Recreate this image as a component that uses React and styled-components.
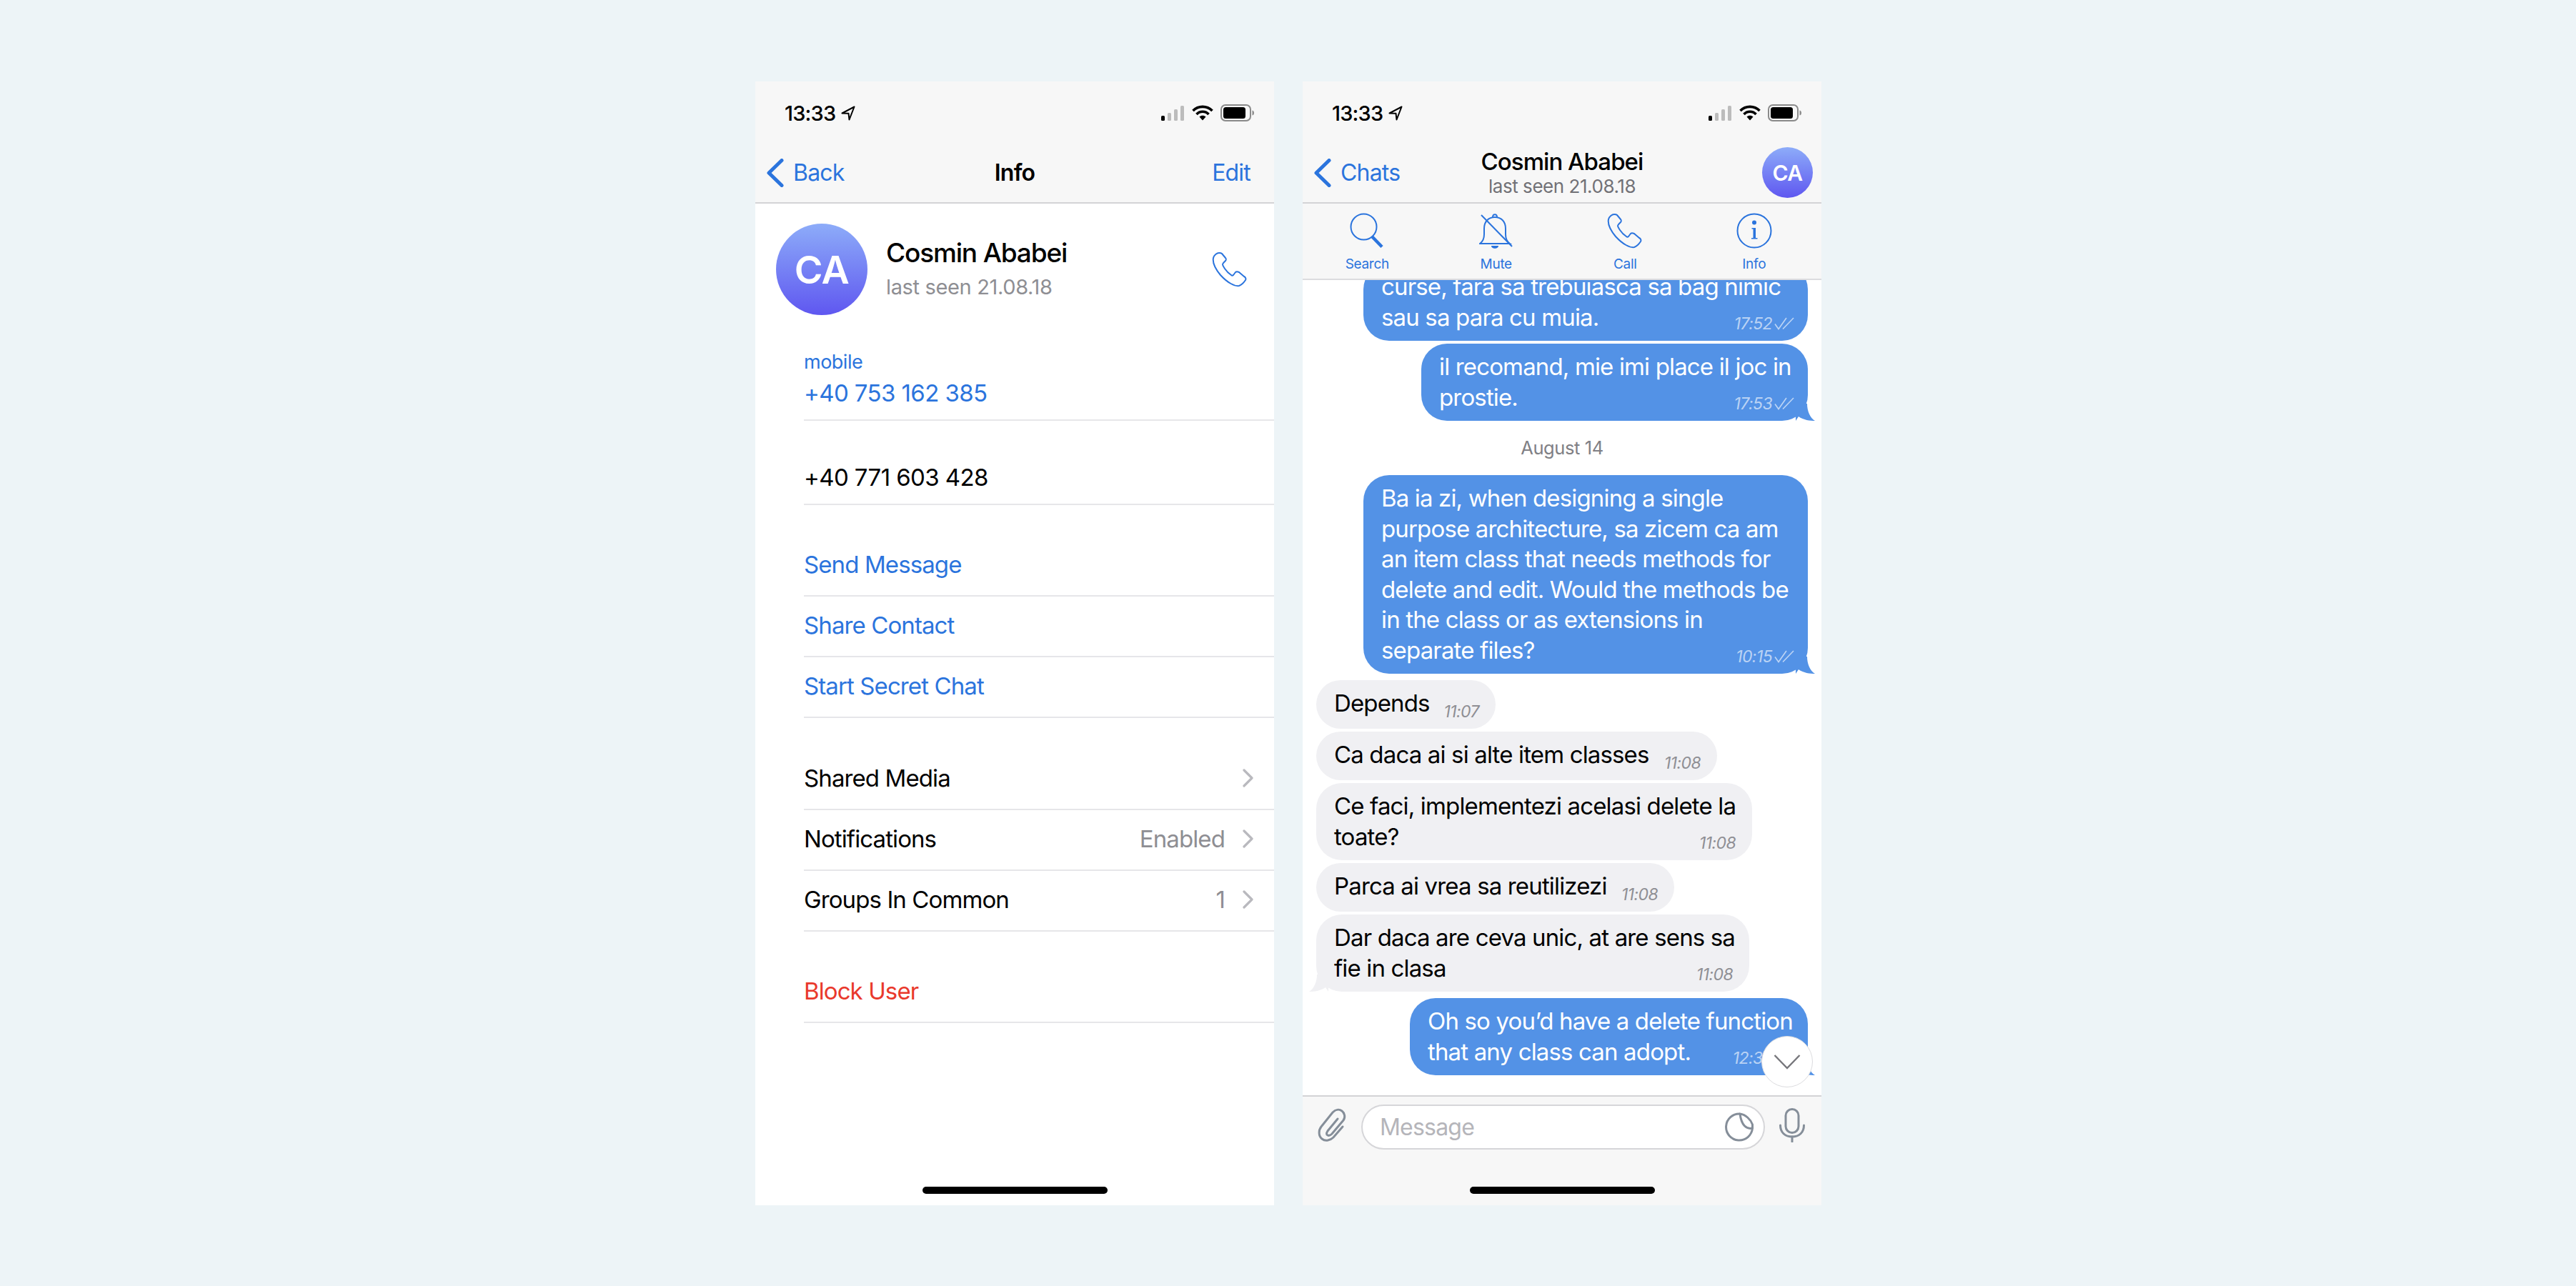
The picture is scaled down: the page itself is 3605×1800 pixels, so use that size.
import React from "react";
import styled, { createGlobalStyle } from "styled-components";

const BLUE = "#2b74dd";
const ICON_GREY = "#858e99";

const GlobalStyle = createGlobalStyle`
  html, body {
    margin: 0;
    background: #edf4f7;
    font-family: Inter, "Liberation Sans", sans-serif;
    color: #000;
  }
  * {
    box-sizing: border-box;
  }
`;

const Page = styled.div`
  display: flex;
  justify-content: center;
  gap: 40px;
  height: 1800px;
  padding-top: 114px;
  padding-left: 1px;
`;

const Phone = styled.div`
  display: flex;
  flex-direction: column;
  width: 726px;
  height: 1573px;
  background: ${(p) => (p.$chat ? "#f7f7f7" : "#fff")};
`;

// top bars
const StatusBarWrap = styled.div`
  display: flex;
  align-items: center;
  justify-content: space-between;
  height: 88px;
  padding: 0 28px 0 41px;
  background: #f7f7f7;
`;

const Clock = styled.div`
  display: flex;
  align-items: center;
  gap: 8px;
  font-size: 29px;
  font-weight: 500;
  letter-spacing: -0.8px;
`;

const StatusIcons = styled.div`
  display: flex;
  align-items: center;
  gap: 10px;
`;

const NavBar = styled.div`
  display: grid;
  grid-template-columns: 1fr auto 1fr;
  align-items: center;
  height: 83px;
  padding: 0 12px 2px;
  background: #f7f7f7;
  border-bottom: 2px solid #d3d3d6;
`;

const NavBack = styled.div`
  display: flex;
  align-items: center;
  gap: 13px;
  margin-left: 4px;
  color: ${BLUE};
  font-size: 32px;
  letter-spacing: -0.8px;
`;

const NavTitle = styled.div`
  font-size: 32px;
  font-weight: 600;
  letter-spacing: -0.8px;
`;

const NavAction = styled.div`
  justify-self: end;
  margin-right: 21px;
  color: ${BLUE};
  font-size: 32px;
  letter-spacing: -0.8px;
`;

const NavCenter = styled.div`
  display: flex;
  flex-direction: column;
  align-items: center;
`;

const NavName = styled.div`
  font-size: 33px;
  line-height: 38px;
  font-weight: 500;
  letter-spacing: -0.95px;
`;

const NavSub = styled.div`
  font-size: 26px;
  line-height: 32px;
  color: #717176;
  letter-spacing: -0.45px;
`;

const Avatar = styled.div`
  display: flex;
  align-items: center;
  justify-content: center;
  flex-shrink: 0;
  justify-self: end;
  width: ${(p) => p.$size}px;
  height: ${(p) => p.$size}px;
  border-radius: 50%;
  background: linear-gradient(180deg, #8dacf9 0%, #5f57f0 100%);
  color: #fff;
  font-size: ${(p) => p.$font}px;
  font-weight: 600;
  letter-spacing: -0.5px;
`;

// info screen
const InfoBody = styled.div`
  display: flex;
  flex-direction: column;
  flex: 1;
`;

const Profile = styled.div`
  display: flex;
  align-items: center;
  gap: 26px;
  padding: 28px 37px 0 29px;
`;

const ProfileText = styled.div`
  flex: 1;
`;

const ProfileName = styled.div`
  margin-bottom: 8px;
  font-size: 37px;
  line-height: 42px;
  font-weight: 500;
  letter-spacing: -1.15px;
`;

const ProfileSeen = styled.div`
  font-size: 29px;
  line-height: 38px;
  color: #8e8e93;
  letter-spacing: -0.35px;
`;

const List = styled.div`
  margin-left: 68px;
`;

const PhoneRow = styled.div`
  margin-top: 46px;
  height: 102px;
  border-bottom: 2px solid #e6e6e9;
`;

const PhoneLabel = styled.div`
  height: 40px;
  line-height: 40px;
  font-size: 27px;
  color: ${BLUE};
  letter-spacing: -0.5px;
`;

const PhoneNumber = styled.div`
  height: 46px;
  line-height: 46px;
  font-size: 33px;
  color: ${BLUE};
  letter-spacing: -0.6px;
`;

const Row = styled.div`
  display: flex;
  align-items: center;
  justify-content: space-between;
  height: ${(p) => p.$height || 85}px;
  margin-top: ${(p) => p.$top || 0}px;
  padding: 0 29px ${(p) => (p.$flat ? 0 : 3)}px 0;
  border-bottom: 2px solid #e6e6e9;
  font-size: 33px;
  letter-spacing: ${(p) => (p.$flat ? "-0.6px" : "-0.9px")};
  color: ${(p) => p.$color || "#000"};
`;

const RowValue = styled.div`
  display: flex;
  align-items: center;
  gap: 25px;
  color: #8e8e93;
`;

const HomeBar = styled.div`
  flex-shrink: 0;
  width: 259px;
  height: 10px;
  margin: auto auto 16px;
  border-radius: 5px;
  background: #000;
`;

// chat screen
const Toolbar = styled.div`
  display: grid;
  grid-template-columns: repeat(4, 180.5px);
  height: 107px;
  background: #f7f7f7;
  border-bottom: 2px solid #dcdcdf;
`;

const ToolItem = styled.div`
  display: flex;
  flex-direction: column;
  align-items: center;
  color: ${BLUE};
  font-size: 19px;
  letter-spacing: -0.3px;
`;

const ToolIcon = styled.div`
  display: flex;
  align-items: flex-end;
  justify-content: center;
  height: 63px;
`;

const ToolLabel = styled.div`
  margin-top: 10px;
  line-height: 24px;
`;

const Messages = styled.div`
  position: relative;
  display: flex;
  flex-direction: column;
  justify-content: flex-end;
  flex: 1;
  min-height: 0;
  overflow: hidden;
  padding: 0 19px 28px;
  background: #fff;
`;

const Bubble = styled.div`
  position: relative;
  flex-shrink: 0;
  align-self: ${(p) => (p.$out ? "flex-end" : "flex-start")};
  width: ${(p) => p.$w}px;
  min-height: 68px;
  margin-top: ${(p) => (p.$mt === undefined ? 4 : p.$mt)}px;
  padding: 11px 25px 12px;
  border-radius: 36px;
  background: ${(p) => (p.$out ? "#5392e6" : "#f0f0f3")};
  color: ${(p) => (p.$out ? "#fff" : "#000")};
  font-size: 33px;
  line-height: 42.5px;
  letter-spacing: -0.85px;
  white-space: nowrap;
`;

const Tail = styled.svg`
  position: absolute;
  bottom: 0;
  ${(p) => (p.$out ? "right: -11px;" : "left: -11px;")}
  transform: ${(p) => (p.$out ? "none" : "scaleX(-1)")};
`;

const TimeStamp = styled.div`
  position: absolute;
  right: ${(p) => (p.$out ? 19 : 23)}px;
  bottom: 10px;
  display: flex;
  align-items: center;
  gap: 3px;
  font-size: 23px;
  line-height: 28px;
  font-style: italic;
  letter-spacing: -0.6px;
  color: ${(p) => (p.$out ? "rgba(255, 255, 255, 0.62)" : "#8e8e93")};
`;

const DateLabel = styled.div`
  flex-shrink: 0;
  height: 76px;
  line-height: 76px;
  text-align: center;
  font-size: 25.5px;
  font-weight: 400;
  color: #808085;
  letter-spacing: -0.4px;
`;

const ScrollDown = styled.div`
  position: absolute;
  right: 12px;
  bottom: 11px;
  display: flex;
  align-items: center;
  justify-content: center;
  width: 72px;
  height: 72px;
  border-radius: 50%;
  background: #fff;
  border: 1px solid #dcdcdf;
`;

const InputBar = styled.div`
  display: flex;
  align-items: flex-start;
  flex-shrink: 0;
  gap: 20px;
  height: 121px;
  padding: 11px 23px 0 21px;
  border-top: 2px solid #d3d3d6;
`;

const AttachSlot = styled.div`
  flex-shrink: 0;
  margin-top: ${(p) => p.$top}px;
  line-height: 0;
`;

const MessageField = styled.div`
  display: flex;
  align-items: center;
  justify-content: space-between;
  flex: 1;
  height: 63px;
  padding: 0 14px 0 24px;
  border: 2px solid #d6d6d9;
  border-radius: 32px;
  background: #fff;
  color: #b5b5ba;
  font-size: 32px;
  letter-spacing: -0.8px;
`;

const ChatFoot = styled.div`
  display: flex;
  flex-direction: column;
  flex-shrink: 0;
  height: 154px;
`;

// icons
const Signal = () => (
  <svg width="33" height="21" viewBox="0 0 33 21">
    <rect x="0" y="14" width="5" height="7" rx="1.5" fill="#000" />
    <rect x="9" y="10" width="5" height="11" rx="1.5" fill="#bcbcbc" />
    <rect x="18" y="5" width="5" height="16" rx="1.5" fill="#bcbcbc" />
    <rect x="27" y="0" width="5" height="21" rx="1.5" fill="#bcbcbc" />
  </svg>
);

const Wifi = () => (
  <svg width="30" height="22" viewBox="0 0 30 22" fill="none" stroke="#000" strokeWidth="3.6">
    <path d="M1.5 8 C9 0.5 21 0.5 28.5 8" />
    <path d="M6.5 13 C11 8 19 8 23.5 13" />
    <path d="M10.5 16.5 L15 21.5 L19.5 16.5 C17 14.2 13 14.2 10.5 16.5Z" fill="#000" stroke="none" />
  </svg>
);

const Battery = () => (
  <svg width="47" height="24" viewBox="0 0 47 24">
    <rect x="1" y="1" width="41" height="22" rx="6" fill="none" stroke="#8a8a8a" strokeWidth="2" />
    <rect x="4" y="4" width="31" height="16" rx="3.5" fill="#000" />
    <path d="M44.5 8.5 C46.5 9 47 10.5 47 12 C47 13.5 46.5 15 44.5 15.5Z" fill="#8a8a8a" />
  </svg>
);

const LocationArrow = () => (
  <svg width="20" height="21" viewBox="0 0 20 21" fill="none" stroke="#000" strokeWidth="2" strokeLinejoin="round">
    <path d="M18.5 1.5 L1.5 10.5 L10.5 10.8 L11.5 19.5 Z" />
  </svg>
);

const BackChevron = () => (
  <svg width="24" height="40" viewBox="0 0 24 40" fill="none" stroke={BLUE} strokeWidth="5" strokeLinecap="round" strokeLinejoin="round">
    <path d="M21 2.5 L3 20 L21 37.5" />
  </svg>
);

const DisclosureChevron = () => (
  <svg width="15" height="26" viewBox="0 0 15 26" fill="none" stroke="#b9b9be" strokeWidth="3.2" strokeLinecap="round" strokeLinejoin="round">
    <path d="M2 2 L13 13 L2 24" />
  </svg>
);

const Handset = () => (
  <svg width="50" height="50" viewBox="0 0 50 50" fill="none" stroke={BLUE} strokeWidth="2" strokeLinejoin="round">
    <path d="M10 2 C7 2 3 5 2 9 C1 14 3 22 12 33 C22 44 32 49 38 48 C41 47 45 43 47 40 C48 38 47 36 45 35 L38 29 C36 28 34 28 33 29 L30 33 C29 34 28 34 27 33 C24 31 20 27 18 24 C16 21 15 19 15 18 C15 17 16 16 17 15 L19 13 C20 12 20 10 19 9 L14 3 C13 2 12 2 10 2 Z" />
  </svg>
);

const SearchIcon = () => (
  <svg width="50" height="50" viewBox="0 0 50 50" fill="none" stroke={BLUE}>
    <circle cx="20.5" cy="19.5" r="18" strokeWidth="2" />
    <path d="M32 33 L46 47.5" strokeWidth="4.5" />
  </svg>
);

const MuteIcon = () => (
  <svg width="47" height="52" viewBox="0 0 47 52" fill="none" stroke={BLUE} strokeWidth="2">
    <path d="M1 45 C4 43 7 40 7 32 L7 24 C7 14 13 8 22 8 C31 8 37 14 37 24 L37 32 C37 40 40 43 43 45 Z" />
    <path d="M19 8 C19 3 25 3 25 8" />
    <path d="M17 48 H27 C27 53 17 53 17 48 Z" fill={BLUE} stroke="none" />
    <path d="M3 5 L46 49" />
  </svg>
);

const InfoIcon = () => (
  <svg width="50" height="50" viewBox="0 0 50 50" fill="none" stroke={BLUE} strokeWidth="2">
    <circle cx="25" cy="25" r="23.5" />
    <circle cx="25" cy="13.5" r="3" fill={BLUE} stroke="none" />
    <path d="M21.5 21 H27 V35 H29.5 V36.5 H21 V35 H23.5 V22.5 H21.5 Z" fill={BLUE} stroke="none" />
  </svg>
);

const Ticks = () => (
  <svg width="28" height="18" viewBox="0 0 28 18" fill="none" stroke="rgba(255,255,255,0.62)" strokeWidth="1.6">
    <path d="M1 9.5 L6 16.5 L17 1" />
    <path d="M12 16.5 L27 1" />
  </svg>
);

const TailShape = ({ out, color }) => (
  <Tail $out={out} width="28" height="24" viewBox="0 0 28 24">
    <path d="M0 0 H16 C16 10 20 20 27 24 C20 24 11 23 4 18 L0 24 Z" fill={color} />
  </Tail>
);

const DownChevron = () => (
  <svg width="38" height="22" viewBox="0 0 38 22" fill="none" stroke="#77777c" strokeWidth="2.4">
    <path d="M1.5 2 L19 20 L36.5 2" />
  </svg>
);

const Paperclip = () => (
  <svg width="41" height="48" viewBox="0 0 41 48" fill="none" stroke={ICON_GREY} strokeWidth="3" strokeLinecap="round">
    <path d="M28 15 L14 32 C12 35 12 37 14 38 C16 39 18 38 20 36 L36 17 C39 13 38 7 34 4 C30 1 25 2 21 6 L5 26 C1 31 1 39 6 43 C11 47 18 45 22 41 L35 26" />
  </svg>
);

const StickerIcon = () => (
  <svg width="40" height="41" viewBox="0 0 40 41" fill="none" stroke={ICON_GREY} strokeWidth="3" strokeLinejoin="round">
    <path d="M21 2 A18.5 18.5 0 1 0 38.5 22" />
    <path d="M21 2 C29 3 36 10 38.5 17 V22 C30 24 23 18 21 2 Z" />
  </svg>
);

const MicIcon = () => (
  <svg width="36" height="48" viewBox="0 0 36 48" fill="none" stroke={ICON_GREY} strokeWidth="3" strokeLinecap="round">
    <rect x="9" y="1.5" width="18" height="33" rx="9" />
    <path d="M1.5 24 C1.5 34 8 40 18 40 C28 40 34.5 34 34.5 24" />
    <path d="M18 40 V47" />
  </svg>
);

const StatusBar = () => (
  <StatusBarWrap>
    <Clock>
      13:33
      <LocationArrow />
    </Clock>
    <StatusIcons>
      <Signal />
      <Wifi />
      <Battery />
    </StatusIcons>
  </StatusBarWrap>
);

const tools = [
  { label: "Search", icon: <SearchIcon /> },
  { label: "Mute", icon: <MuteIcon /> },
  { label: "Call", icon: <Handset /> },
  { label: "Info", icon: <InfoIcon /> },
];

const Message = ({ out, w, mt, time, tail, children }) => (
  <Bubble $out={out} $w={w} $mt={mt}>
    {children}
    {tail && <TailShape out={out} color={out ? "#5392e6" : "#f0f0f3"} />}
    <TimeStamp $out={out}>
      {time}
      {out && <Ticks />}
    </TimeStamp>
  </Bubble>
);

const InfoScreen = () => (
  <Phone>
    <StatusBar />
    <NavBar>
      <NavBack>
        <BackChevron />
        Back
      </NavBack>
      <NavTitle>Info</NavTitle>
      <NavAction>Edit</NavAction>
    </NavBar>
    <InfoBody>
      <Profile>
        <Avatar $size={128} $font={54}>CA</Avatar>
        <ProfileText>
          <ProfileName>Cosmin Ababei</ProfileName>
          <ProfileSeen>last seen 21.08.18</ProfileSeen>
        </ProfileText>
        <Handset />
      </Profile>
      <List>
        <PhoneRow>
          <PhoneLabel>mobile</PhoneLabel>
          <PhoneNumber>+40 753 162 385</PhoneNumber>
        </PhoneRow>
        <Row $flat $top={42} $height={76}>+40 771 603 428</Row>
        <Row $top={43} $color={BLUE}>Send Message</Row>
        <Row $color={BLUE}>Share Contact</Row>
        <Row $color={BLUE}>Start Secret Chat</Row>
        <Row $top={44}>
          Shared Media
          <DisclosureChevron />
        </Row>
        <Row>
          Notifications
          <RowValue>
            Enabled
            <DisclosureChevron />
          </RowValue>
        </Row>
        <Row>
          Groups In Common
          <RowValue>
            1
            <DisclosureChevron />
          </RowValue>
        </Row>
        <Row $top={43} $color="#e9392c">Block User</Row>
      </List>
      <HomeBar />
    </InfoBody>
  </Phone>
);

const ChatScreen = () => (
  <Phone $chat>
    <StatusBar />
    <NavBar>
      <NavBack>
        <BackChevron />
        Chats
      </NavBack>
      <NavCenter>
        <NavName>Cosmin Ababei</NavName>
        <NavSub>last seen 21.08.18</NavSub>
      </NavCenter>
      <Avatar $size={71} $font={30}>CA</Avatar>
    </NavBar>
    <Toolbar>
      {tools.map((tool) => (
        <ToolItem key={tool.label}>
          <ToolIcon>{tool.icon}</ToolIcon>
          <ToolLabel>{tool.label}</ToolLabel>
        </ToolItem>
      ))}
    </Toolbar>
    <Messages>
      <Message out w={622} time="17:52">
        curse, fara sa trebuiasca sa bag nimic
        <br />
        sau sa para cu muia.
      </Message>
      <Message out w={541} time="17:53" tail>
        il recomand, mie imi place il joc in
        <br />
        prostie.
      </Message>
      <DateLabel>August 14</DateLabel>
      <Message out w={622} mt={0} time="10:15" tail>
        Ba ia zi, when designing a single
        <br />
        purpose architecture, sa zicem ca am
        <br />
        an item class that needs methods for
        <br />
        delete and edit. Would the methods be
        <br />
        in the class or as extensions in
        <br />
        separate files?
      </Message>
      <Message w={251} mt={9} time="11:07">Depends</Message>
      <Message w={561} time="11:08">Ca daca ai si alte item classes</Message>
      <Message w={610} time="11:08">
        Ce faci, implementezi acelasi delete la
        <br />
        toate?
      </Message>
      <Message w={501} time="11:08">Parca ai vrea sa reutilizezi</Message>
      <Message w={606} time="11:08" tail>
        Dar daca are ceva unic, at are sens sa
        <br />
        fie in clasa
      </Message>
      <Message out w={557} mt={9} time="12:35" tail>
        Oh so you’d have a delete function
        <br />
        that any class can adopt.
      </Message>
      <ScrollDown>
        <DownChevron />
      </ScrollDown>
    </Messages>
    <ChatFoot>
      <InputBar>
        <AttachSlot $top={5}>
          <Paperclip />
        </AttachSlot>
        <MessageField>
          Message
          <StickerIcon />
        </MessageField>
        <AttachSlot $top={5}>
          <MicIcon />
        </AttachSlot>
      </InputBar>
      <HomeBar />
    </ChatFoot>
  </Phone>
);

export default function App() {
  return (
    <>
      <GlobalStyle />
      <Page>
        <InfoScreen />
        <ChatScreen />
      </Page>
    </>
  );
}
